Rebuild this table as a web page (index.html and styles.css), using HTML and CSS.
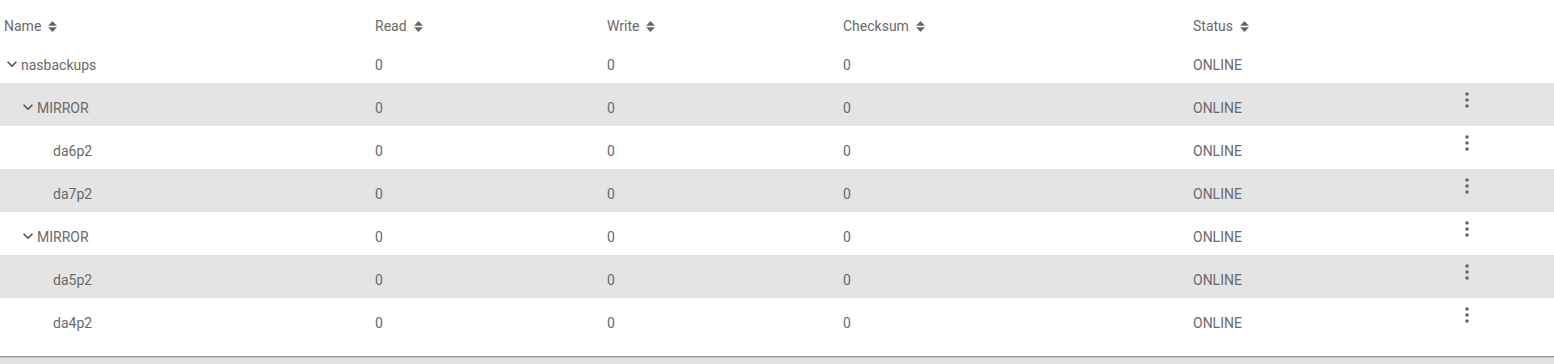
FILE: index.html
```html
<!DOCTYPE html>
<html>
<head>
<meta charset="utf-8">
<link rel="stylesheet" href="styles.css">
</head>
<body>
<div class="table">
  <div class="row head">
    <div class="cell c-name">Name <svg class="sort" viewBox="0 0 8 10"><path d="M0 4.3L4 0 8 4.3z M0 5.7h8L4 10z"/></svg></div>
    <div class="cell">Read <svg class="sort" viewBox="0 0 8 10"><path d="M0 4.3L4 0 8 4.3z M0 5.7h8L4 10z"/></svg></div>
    <div class="cell">Write <svg class="sort" viewBox="0 0 8 10"><path d="M0 4.3L4 0 8 4.3z M0 5.7h8L4 10z"/></svg></div>
    <div class="cell">Checksum <svg class="sort" viewBox="0 0 8 10"><path d="M0 4.3L4 0 8 4.3z M0 5.7h8L4 10z"/></svg></div>
    <div class="cell">Status <svg class="sort" viewBox="0 0 8 10"><path d="M0 4.3L4 0 8 4.3z M0 5.7h8L4 10z"/></svg></div>
    <div class="cell"></div>
    <div class="cell"></div>
  </div>

  <div class="row">
    <div class="cell c-name lvl-0"><svg class="chev" viewBox="0 0 24 24"><path d="M16.59 8.59L12 13.17 7.41 8.59 6 10l6 6 6-6z"/></svg>nasbackups</div>
    <div class="cell">0</div><div class="cell">0</div><div class="cell">0</div>
    <div class="cell">ONLINE</div><div class="cell act"></div><div class="cell"></div>
  </div>

  <div class="row alt">
    <div class="cell c-name lvl-1"><svg class="chev" viewBox="0 0 24 24"><path d="M16.59 8.59L12 13.17 7.41 8.59 6 10l6 6 6-6z"/></svg>MIRROR</div>
    <div class="cell">0</div><div class="cell">0</div><div class="cell">0</div>
    <div class="cell">ONLINE</div>
    <div class="cell act"><svg class="kebab" viewBox="0 0 24 24"><circle cx="12" cy="6" r="1.8"/><circle cx="12" cy="12" r="1.8"/><circle cx="12" cy="18" r="1.8"/></svg></div>
    <div class="cell"></div>
  </div>

  <div class="row">
    <div class="cell c-name lvl-2">da6p2</div>
    <div class="cell">0</div><div class="cell">0</div><div class="cell">0</div>
    <div class="cell">ONLINE</div>
    <div class="cell act"><svg class="kebab" viewBox="0 0 24 24"><circle cx="12" cy="6" r="1.8"/><circle cx="12" cy="12" r="1.8"/><circle cx="12" cy="18" r="1.8"/></svg></div>
    <div class="cell"></div>
  </div>

  <div class="row alt">
    <div class="cell c-name lvl-2">da7p2</div>
    <div class="cell">0</div><div class="cell">0</div><div class="cell">0</div>
    <div class="cell">ONLINE</div>
    <div class="cell act"><svg class="kebab" viewBox="0 0 24 24"><circle cx="12" cy="6" r="1.8"/><circle cx="12" cy="12" r="1.8"/><circle cx="12" cy="18" r="1.8"/></svg></div>
    <div class="cell"></div>
  </div>

  <div class="row">
    <div class="cell c-name lvl-1"><svg class="chev" viewBox="0 0 24 24"><path d="M16.59 8.59L12 13.17 7.41 8.59 6 10l6 6 6-6z"/></svg>MIRROR</div>
    <div class="cell">0</div><div class="cell">0</div><div class="cell">0</div>
    <div class="cell">ONLINE</div>
    <div class="cell act"><svg class="kebab" viewBox="0 0 24 24"><circle cx="12" cy="6" r="1.8"/><circle cx="12" cy="12" r="1.8"/><circle cx="12" cy="18" r="1.8"/></svg></div>
    <div class="cell"></div>
  </div>

  <div class="row alt">
    <div class="cell c-name lvl-2">da5p2</div>
    <div class="cell">0</div><div class="cell">0</div><div class="cell">0</div>
    <div class="cell">ONLINE</div>
    <div class="cell act"><svg class="kebab" viewBox="0 0 24 24"><circle cx="12" cy="6" r="1.8"/><circle cx="12" cy="12" r="1.8"/><circle cx="12" cy="18" r="1.8"/></svg></div>
    <div class="cell"></div>
  </div>

  <div class="row">
    <div class="cell c-name lvl-2">da4p2</div>
    <div class="cell">0</div><div class="cell">0</div><div class="cell">0</div>
    <div class="cell">ONLINE</div>
    <div class="cell act"><svg class="kebab" viewBox="0 0 24 24"><circle cx="12" cy="6" r="1.8"/><circle cx="12" cy="12" r="1.8"/><circle cx="12" cy="18" r="1.8"/></svg></div>
    <div class="cell"></div>
  </div>

  <div class="spacer"></div>
</div>
<div class="footer"></div>
</body>
</html>
```

FILE: styles.css
```css
html, body {
  margin: 0;
  padding: 0;
  background: #fff;
}
body {
  font-family: Roboto, "Liberation Sans", sans-serif;
  font-size: 14px;
  color: #6a6a6a;
  width: 1554px;
  height: 364px;
  overflow: hidden;
}
.table {
  display: flex;
  flex-direction: column;
}
.row {
  display: grid;
  grid-template-columns: 371px 232px 236px 350px 266px 24px 1fr;
  height: 43px;
  box-sizing: border-box;
  padding-top: 6px;
  align-items: center;
}
.row.head {
  height: 40px;
  padding-top: 12px;
}
.row.alt {
  background: #e4e4e4;
}
.cell {
  padding-left: 4px;
  display: flex;
  align-items: center;
  white-space: nowrap;
  line-height: 16px;
}
.row .cell:nth-child(6) {
  padding-left: 0;
}
.c-name.lvl-0 { padding-left: 2px; }
.c-name.lvl-1 { padding-left: 18px; }
.c-name.lvl-2 { padding-left: 53px; }
.sort {
  width: 9px;
  height: 11px;
  margin-left: 7px;
  fill: #666;
}
.chev {
  width: 20px;
  height: 20px;
  fill: #555;
  margin-top: -2px;
  margin-right: -1px;
}
.act {
  align-self: start;
  margin-top: -1px;
}
.kebab {
  width: 24px;
  height: 24px;
  fill: #666;
}
.spacer {
  height: 15px;
}
.footer {
  border-top: 1px solid #9a9a9a;
  box-shadow: inset 0 1px 0 #c4c4c4;
  background: #e2e2e2;
  height: 20px;
}
```
